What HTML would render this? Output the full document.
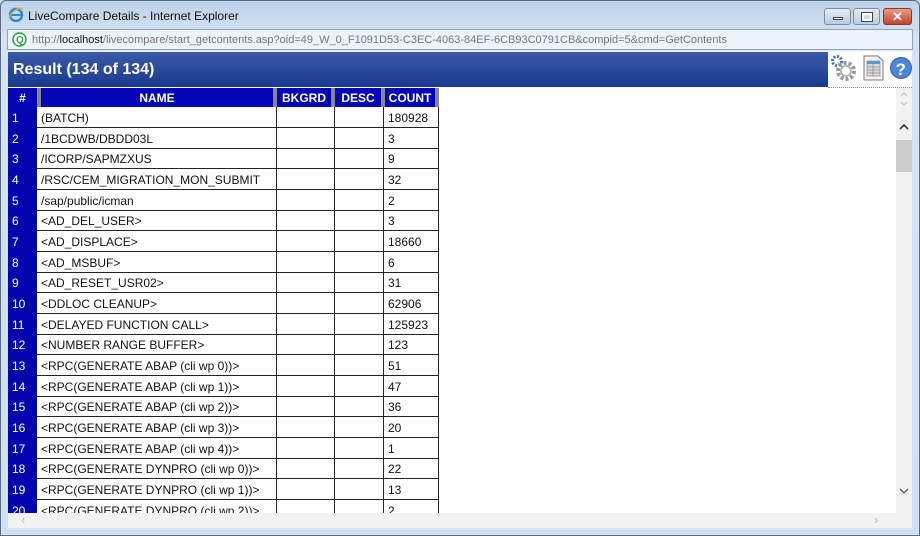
<!DOCTYPE html>
<html><head><style>
*{margin:0;padding:0;box-sizing:border-box}
body{width:920px;height:536px;overflow:hidden;background:#c9dbee;font-family:"Liberation Sans",sans-serif;position:relative}
.a{position:absolute}
.frame{left:0;top:0;width:920px;height:536px;background:linear-gradient(#bcd2ea,#d6e4f3 40px,#cfe0f1);border:1px solid #5a6d84;border-radius:6px 6px 0 0}
.title{left:28px;top:9px;font-size:12px;color:#111}
.addr{left:7px;top:29px;width:906px;height:21px;background:#edf3fa;border:1px solid #8fa5bf}
.addr span{position:absolute;left:24px;top:4px;font-size:11px;color:#777;white-space:nowrap}
.content{left:8px;top:51px;width:904px;height:477px;background:#fff}
.hdr{left:8px;top:52px;width:820px;height:35px;background:linear-gradient(#3a5aa8,#1b3a8f);color:#fff;font-weight:bold;font-size:16px;padding:9px 0 0 5px}
.row{position:absolute;left:8px;height:21px;width:431px;border-bottom:1px solid #222;font-size:12px}
.num{position:absolute;left:0;top:0;width:29px;height:21px;background:#0505b0;color:#fff;padding:4px 0 0 4px}
.c{position:absolute;top:0;height:21px;padding:4px 0 0 4px;border-right:1px solid #222;color:#111}
.th{position:absolute;top:88px;height:19px;background:#0505b8;color:#fff;font-weight:bold;font-size:12px;text-align:center;padding-top:3px}
.g{position:absolute;top:88px;height:19px;width:4px;background:#888}
</style></head><body>
<div class="a frame"></div>
<svg class="a" style="left:8px;top:6px" width="16" height="16" viewBox="0 0 16 16"><circle cx="8" cy="9" r="6" fill="none" stroke="#2a8ad8" stroke-width="2.4"/><path d="M3 9h10" stroke="#2a8ad8" stroke-width="2"/><path d="M1 12C4 4 12 1 15 3" stroke="#e8b020" stroke-width="1.5" fill="none"/></svg>
<div class="a title">LiveCompare Details - Internet Explorer</div>
<div class="a" style="left:824px;top:8px;width:27px;height:17px;border:1px solid #7a8ca3;border-radius:3px;background:linear-gradient(#e4ecf6,#b9cbe0)"><div style="position:absolute;left:8px;top:8px;width:10px;height:3px;background:#fff;border:1px solid #444"></div></div>
<div class="a" style="left:853px;top:8px;width:27px;height:17px;border:1px solid #7a8ca3;border-radius:3px;background:linear-gradient(#e4ecf6,#b9cbe0)"><div style="position:absolute;left:8px;top:4px;width:10px;height:8px;border:2px solid #fff;outline:1px solid #444"></div></div>
<div class="a" style="left:883px;top:8px;width:29px;height:17px;border:1px solid #8a3a2a;border-radius:3px;background:linear-gradient(#e89a84,#c3452e);color:#fff;font-weight:bold;font-size:13px;text-align:center;line-height:15px">✕</div>
<div class="a addr"><svg style="position:absolute;left:4px;top:2px" width="15" height="15"><circle cx="7.5" cy="7.5" r="6.5" fill="#fff" stroke="#2aa040" stroke-width="1.5"/><text x="4" y="11" font-size="10" font-weight="bold" fill="#2aa040" font-family="Liberation Sans">Q</text></svg><span>http://<b style="color:#111;font-weight:normal">localhost</b>/livecompare/start_getcontents.asp?oid=49_W_0_F1091D53-C3EC-4063-84EF-6CB93C0791CB&amp;compid=5&amp;cmd=GetContents</span></div>
<div class="a content"></div>
<div class="a hdr">Result (134 of 134)</div>
<svg class="a" style="left:829px;top:54px" width="30" height="30"><circle cx="8" cy="7" r="4.5" fill="none" stroke="#3a6ad0" stroke-width="3" stroke-dasharray="2 1.5"/><circle cx="17" cy="17" r="8" fill="none" stroke="#999" stroke-width="4" stroke-dasharray="3 2"/><circle cx="17" cy="17" r="5" fill="#fff" stroke="#aaa" stroke-width="1.5"/></svg>
<svg class="a" style="left:863px;top:55px" width="22" height="26"><path d="M1 1h14l5 5v19H1z" fill="#f4f4f4" stroke="#777"/><rect x="4" y="6" width="13" height="15" fill="#ddd" stroke="#888" stroke-width=".7"/><rect x="4" y="6" width="13" height="3" fill="#5a9ad8"/><path d="M4 12h13M4 15h13M4 18h13M10 6v15" stroke="#888" stroke-width=".7"/></svg>
<svg class="a" style="left:889px;top:55px" width="24" height="26"><circle cx="12" cy="13" r="10.5" fill="#4a86e0" stroke="#2a5ab0"/><text x="6.5" y="20" font-size="17" font-weight="bold" fill="#fff" font-family="Liberation Sans">?</text></svg>
<div class="a" style="left:828px;top:87px;width:84px;border-top:1px dotted #888"></div>

<div class="th" style="left:8px;width:29px">#</div><div class="g" style="left:37px"></div>
<div class="th" style="left:41px;width:232px">NAME</div><div class="g" style="left:273px"></div>
<div class="th" style="left:277px;width:54px">BKGRD</div><div class="g" style="left:331px"></div>
<div class="th" style="left:335px;width:46px">DESC</div><div class="g" style="left:381px"></div>
<div class="th" style="left:385px;width:50px">COUNT</div><div class="g" style="left:435px"></div>
<div id="rows"></div>
<div class="a" style="left:8px;top:513px;width:904px;height:15px;background:#f2f2f2;color:#bbb;font-size:13px"><span style="position:absolute;left:13px;top:-1px">‹</span><span style="position:absolute;left:866px;top:-1px">›</span></div>
<div class="a" style="left:896px;top:88px;width:16px;height:425px;background:#f2f2f2">
<svg style="position:absolute;left:3px;top:2px" width="10" height="20"><path d="M2 6l3-3 3 3M2 12l3 3 3-3" stroke="#bbb" fill="none"/></svg>
<svg style="position:absolute;left:3px;top:34px" width="10" height="10"><path d="M1 7l4-4 4 4" stroke="#333" stroke-width="1.6" fill="none"/></svg>
<div style="position:absolute;top:52px;left:0;width:16px;height:32px;background:#cdcdcd"></div>
<svg style="position:absolute;left:3px;top:398px" width="10" height="10"><path d="M1 3l4 4 4-4" stroke="#555" stroke-width="1.3" fill="none"/></svg></div>
<script>
var d=[["(BATCH)","180928"],["/1BCDWB/DBDD03L","3"],["/ICORP/SAPMZXUS","9"],["/RSC/CEM_MIGRATION_MON_SUBMIT","32"],["/sap/public/icman","2"],["<AD_DEL_USER>","3"],["<AD_DISPLACE>","18660"],["<AD_MSBUF>","6"],["<AD_RESET_USR02>","31"],["<DDLOC CLEANUP>","62906"],["<DELAYED FUNCTION CALL>","125923"],["<NUMBER RANGE BUFFER>","123"],["<RPC(GENERATE ABAP (cli wp 0))>","51"],["<RPC(GENERATE ABAP (cli wp 1))>","47"],["<RPC(GENERATE ABAP (cli wp 2))>","36"],["<RPC(GENERATE ABAP (cli wp 3))>","20"],["<RPC(GENERATE ABAP (cli wp 4))>","1"],["<RPC(GENERATE DYNPRO (cli wp 0))>","22"],["<RPC(GENERATE DYNPRO (cli wp 1))>","13"],["<RPC(GENERATE DYNPRO (cli wp 2))>","2"]];
var h="";function e(s){return s.replace(/</g,"&lt;").replace(/>/g,"&gt;")}
d.forEach(function(r,i){var t=107+Math.round(i*20.67);var hh=i==19?(513-t):21;
h+='<div class="row" style="top:'+t+'px;height:'+hh+'px;'+(i==19?'border-bottom:none;overflow:hidden':'')+'"><div class="num">'+(i+1)+'</div><div class="c" style="left:29px;width:240px">'+e(r[0])+'</div><div class="c" style="left:269px;width:58px"></div><div class="c" style="left:327px;width:49px"></div><div class="c" style="left:376px;width:55px">'+r[1]+'</div></div>';});
document.getElementById("rows").innerHTML=h;
</script>
</body></html>
